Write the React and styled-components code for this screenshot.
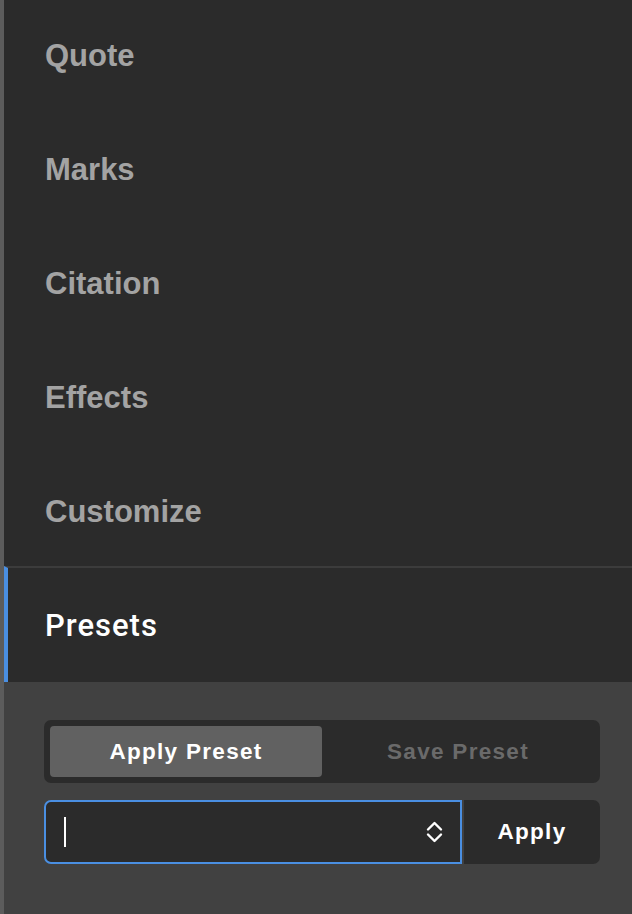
import React, { useState } from "react";
import styled, { createGlobalStyle } from "styled-components";

const GlobalStyle = createGlobalStyle`
  html, body {
    margin: 0;
    padding: 0;
    background: #414141;
  }

  body {
    font-family: "Liberation Sans", Arial, sans-serif;
  }

  * {
    box-sizing: border-box;
  }
`;

const Sidebar = styled.div`
  width: 632px;
  height: 914px;
  display: flex;
  flex-direction: column;
  overflow: hidden;
  border-left: 4px solid #5c5c5c;
  background: #414141;
`;

// the list is scrolled a few pixels, so the first tab is cut at the top
const TabList = styled.div`
  display: flex;
  flex-direction: column;
  margin-top: -4px;
`;

const Tab = styled.div`
  flex-shrink: 0;
  height: ${(props) => (props.active ? "116px" : "114px")};
  display: flex;
  align-items: center;
  padding-left: 37px;
  padding-top: ${(props) => (props.active ? "0" : "6px")};
  background: #2b2b2b;
  border-left: 4px solid ${(props) => (props.active ? "#4a8fe2" : "transparent")};
  border-top: ${(props) => (props.active ? "2px solid #3c3c3c" : "none")};
  color: ${(props) => (props.active ? "#ffffff" : "#a3a3a3")};
  font-family: ${(props) =>
    props.active ? "Roboto, sans-serif" : '"Liberation Sans", Arial, sans-serif'};
  font-size: 31px;
  font-weight: ${(props) => (props.active ? 500 : 700)};
  letter-spacing: ${(props) => (props.active ? "1px" : "0")};
  cursor: pointer;
`;

const Panel = styled.div`
  flex: 1;
  display: flex;
  flex-direction: column;
  gap: 17px;
  padding: 38px 32px 0 40px;
  background: #414141;
`;

const Segmented = styled.div`
  height: 63px;
  display: flex;
  padding: 6px;
  border-radius: 7px;
  background: #2b2b2b;
`;

const Segment = styled.button`
  flex: 1;
  border: none;
  border-radius: 4px;
  background: ${(props) => (props.active ? "#616161" : "transparent")};
  color: ${(props) => (props.active ? "#ffffff" : "#6a6a6a")};
  font-family: "Liberation Sans", Arial, sans-serif;
  font-size: 22.5px;
  font-weight: 700;
  letter-spacing: 1.3px;
  cursor: pointer;
`;

const InputRow = styled.div`
  height: 64px;
  display: flex;
  gap: 2px;
`;

const SelectBox = styled.div`
  flex: 1;
  display: flex;
  align-items: center;
  justify-content: space-between;
  padding: 0 17px 0 18px;
  border: 2px solid #4a8fe2;
  border-radius: 7px 0 0 7px;
  background: #2b2b2b;
`;

const Caret = styled.span`
  width: 2px;
  height: 30px;
  background: #ffffff;
`;

const ApplyButton = styled.button`
  width: 136px;
  border: none;
  border-radius: 0 7px 7px 0;
  background: #2b2b2b;
  color: #ffffff;
  font-family: "Liberation Sans", Arial, sans-serif;
  font-size: 22.5px;
  font-weight: 700;
  letter-spacing: 1.3px;
  cursor: pointer;
`;

const ChevronUpDown = () => (
  <svg width="17" height="22" viewBox="0 0 17 22" fill="none">
    <path
      d="M2 8.5 L8.5 2 L15 8.5 M2 13.5 L8.5 20 L15 13.5"
      stroke="#ffffff"
      strokeWidth="2.4"
      strokeLinecap="round"
      strokeLinejoin="round"
    />
  </svg>
);

const tabs = ["Quote", "Marks", "Citation", "Effects", "Customize", "Presets"];

const App = () => {
  const [activeTab, setActiveTab] = useState("Presets");
  const [mode, setMode] = useState("apply");

  return (
    <>
      <GlobalStyle />
      <Sidebar>
        <TabList>
          {tabs.map((tab) => (
            <Tab key={tab} active={tab === activeTab} onClick={() => setActiveTab(tab)}>
              {tab}
            </Tab>
          ))}
        </TabList>

        {activeTab === "Presets" && (
          <Panel>
            <Segmented>
              <Segment active={mode === "apply"} onClick={() => setMode("apply")}>
                Apply Preset
              </Segment>
              <Segment active={mode === "save"} onClick={() => setMode("save")}>
                Save Preset
              </Segment>
            </Segmented>

            <InputRow>
              <SelectBox>
                <Caret />
                <ChevronUpDown />
              </SelectBox>
              <ApplyButton>Apply</ApplyButton>
            </InputRow>
          </Panel>
        )}
      </Sidebar>
    </>
  );
};

export default App;
